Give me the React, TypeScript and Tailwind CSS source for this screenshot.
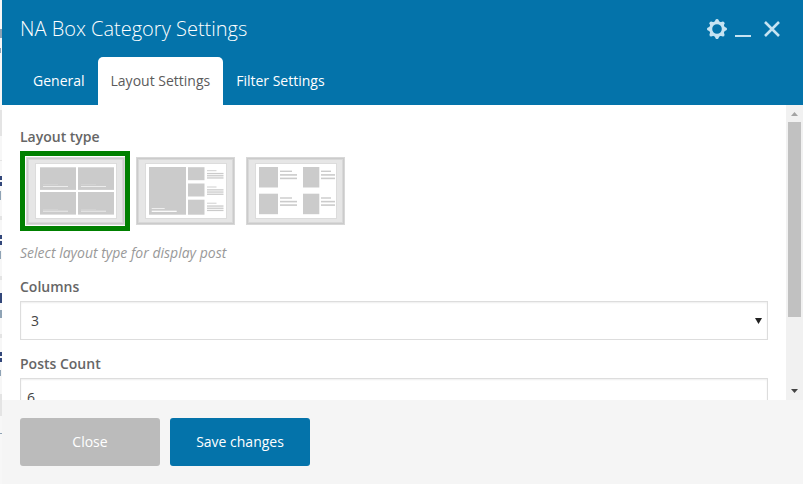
import React, { useState } from "react";

const tabs = ["General", "Layout Settings", "Filter Settings"];

function Frame({ children }: { children: React.ReactNode }) {
  return (
    <svg viewBox="0 0 100 70" className="block h-[70px] w-[100px]" aria-hidden="true">
      <rect x="1" y="1" width="99" height="68" fill="#d8d8d8" />
      <rect x="2" y="2" width="97" height="66" fill="#cbcbcb" />
      <rect x="3" y="3" width="95" height="64" fill="#d8d8d8" />
      <rect x="4" y="4" width="93" height="62" fill="#e6e6e6" />
      <rect x="10" y="7" width="82" height="56" fill="#dcdcdc" />
      <rect x="11" y="8" width="80" height="54" fill="#fff" />
      {children}
    </svg>
  );
}

function Lines({ x, y, w, short, gap }: { x: number; y: number; w: number; short: number; gap: number }) {
  return (
    <g fill="#cbcbcb">
      <rect x={x} y={y} width={short} height="1.4" />
      <rect x={x} y={y + gap} width={w} height="1.6" />
      <rect x={x} y={y + gap * 2} width={w} height="1.6" />
    </g>
  );
}

function GridArt() {
  return (
    <Frame>
      {[15, 53].map((x) =>
        [11.3, 36].map((y) => (
          <g key={`${x}-${y}`}>
            <rect x={x} y={y} width="36" height="22.6" fill="#cbcbcb" />
            <rect x={x + 3} y={y + 17} width="15" height="0.7" fill="#d6d6d6" />
            <rect x={x + 3} y={y + 18.7} width="25" height="1" fill="#ececec" />
          </g>
        )),
      )}
    </Frame>
  );
}

function FeatureArt() {
  return (
    <Frame>
      <rect x="14" y="11" width="37" height="47.7" fill="#cbcbcb" />
      <rect x="16.7" y="52" width="13" height="1" fill="#eee" />
      <rect x="16.7" y="54.7" width="25" height="1.2" fill="#fff" />
      {[11.2, 27.5, 43.7].map((y) => (
        <g key={y}>
          <rect x="53" y={y} width="16.5" height={y > 40 ? 15 : 13} fill="#cbcbcb" />
          <rect x="72" y={y + 3} width="9.5" height="1" fill="#cfcfcf" />
          <rect x="72" y={y + 5.7} width="16.5" height="1.3" fill="#cbcbcb" />
          <rect x="72" y={y + 7.9} width="16.5" height="1.3" fill="#cbcbcb" />
          <rect x="72" y={y + 10.1} width="16.5" height="1.3" fill="#cbcbcb" />
        </g>
      ))}
    </Frame>
  );
}

function ListArt() {
  return (
    <Frame>
      {[11, 37.7].map((y) => (
        <g key={y}>
          <rect x="14" y={y} width="19" height="20.5" fill="#cbcbcb" />
          <Lines x={35} y={y + 3.6} w={17} short={12} gap={3.5} />
          <rect x="58" y={y} width="16.3" height="20.5" fill="#cbcbcb" />
          <Lines x={76} y={y + 3.6} w={14} short={10} gap={3.5} />
        </g>
      ))}
    </Frame>
  );
}

const layouts = [
  { id: "grid", name: "Grid", art: <GridArt /> },
  { id: "feature", name: "Feature", art: <FeatureArt /> },
  { id: "list", name: "List", art: <ListArt /> },
];

function GearIcon() {
  return (
    <svg viewBox="0 0 20 20" className="size-5" aria-hidden="true">
      <circle cx="10" cy="10" r="6.3" fill="none" stroke="currentColor" strokeWidth="3" />
      {[0, 45, 90, 135, 180, 225, 270, 315].map((a) => (
        <path key={a} d="M7.2 3.5 8.7.6Q10-.7 11.3.6L12.8 3.5Z" fill="currentColor" transform={`rotate(${a} 10 10)`} />
      ))}
    </svg>
  );
}

function PageEdge() {
  return (
    <div className="flex w-[2px] shrink-0 bg-[#f7f7f7]" aria-hidden="true">
      <svg width="2" height="484" className="block">
        <g fill="#e4e4e4">
          <rect y="110" width="2" height="26" />
          <rect y="160" width="2" height="1" />
          <rect y="216" width="2" height="4" />
          <rect y="276" width="2" height="4" />
          <rect y="334" width="2" height="4" />
          <rect y="394" width="2" height="22" />
        </g>
        <g fill="#8fa3b5">
          <rect y="29" width="2" height="9" />
          <rect y="48" width="1" height="5" />
          <rect y="191" width="1" height="9" />
          <rect y="251" width="1" height="8" />
          <rect y="310" width="2" height="8" />
          <rect y="370" width="1" height="6" />
          <rect y="433" width="2" height="1" />
        </g>
        <g fill="#33477a">
          <rect y="176" width="2" height="4" />
          <rect y="182" width="2" height="4" />
          <rect y="235" width="2" height="4" />
          <rect y="241" width="2" height="4" />
          <rect y="293" width="2" height="10" />
          <rect y="352" width="2" height="4" />
          <rect y="358" width="2" height="4" />
        </g>
      </svg>
    </div>
  );
}

export default function App() {
  const [tab, setTab] = useState("Layout Settings");
  const [layout, setLayout] = useState("grid");
  const [columns, setColumns] = useState("3");
  const [count, setCount] = useState("6");

  return (
    <div className="flex h-screen overflow-hidden bg-white font-['Open_Sans',sans-serif] text-sm text-[#5b5b5b]">
      <PageEdge />
      <div className="flex min-w-0 flex-1 flex-col">
        <header className="bg-[#0473aa] px-[18px] text-white">
          <div className="flex h-[57px] items-center justify-between">
            <h1 className="text-xl font-light">NA Box Category Settings</h1>
            <div className="flex items-center gap-2 text-[#c6e3f2]">
              <button type="button" aria-label="Settings" className="block">
                <GearIcon />
              </button>
              <button type="button" aria-label="Minimize" className="flex h-5 w-4 items-end pb-[2px]">
                <span className="h-[2px] w-full bg-current" />
              </button>
              <button type="button" aria-label="Close window" className="ml-1 block pr-1">
                <svg viewBox="0 0 18 18" className="size-[18px]" aria-hidden="true">
                  <path d="M2 2 16 16M16 2 2 16" stroke="currentColor" strokeWidth="2.6" fill="none" />
                </svg>
              </button>
            </div>
          </div>
          <div role="tablist" className="flex h-12">
            {tabs.map((t) => (
              <button
                key={t}
                type="button"
                role="tab"
                aria-selected={t === tab}
                onClick={() => setTab(t)}
                className={
                  t === tab
                    ? "rounded-t-[5px] bg-white px-[13px] text-[#5b5b5b]"
                    : "px-[13px] text-white"
                }
              >
                {t}
              </button>
            ))}
          </div>
        </header>

        <div className="flex min-h-0 flex-1">
          <main className="min-w-0 flex-1 overflow-hidden px-[18px] pt-[22px]">
            <fieldset>
              <legend className="mb-1 leading-5 font-semibold text-[#666]">Layout type</legend>
              <div className="flex">
                {layouts.map((l) => (
                  <label
                    key={l.id}
                    className={
                      l.id === layout
                        ? "cursor-pointer border-[5px] border-[#008000]"
                        : "cursor-pointer border-[5px] border-transparent"
                    }
                  >
                    <input
                      type="radio"
                      name="layout"
                      value={l.id}
                      aria-label={l.name}
                      checked={l.id === layout}
                      onChange={() => setLayout(l.id)}
                      className="sr-only"
                    />
                    {l.art}
                  </label>
                ))}
              </div>
            </fieldset>
            <p className="mt-3 leading-5 text-[#999] italic">Select layout type for display post</p>

            <label htmlFor="columns" className="mt-3.5 block leading-5 font-semibold text-[#666]">
              Columns
            </label>
            <div className="mt-1 grid items-center">
              <select
                id="columns"
                value={columns}
                onChange={(e) => setColumns(e.target.value)}
                className="col-start-1 row-start-1 h-[39px] w-full appearance-none border border-[#ddd] bg-white px-2.5 text-[#444] shadow-[inset_0_1px_2px_rgba(0,0,0,0.07)]"
              >
                <option>1</option>
                <option>2</option>
                <option>3</option>
                <option>4</option>
              </select>
              <svg
                viewBox="0 0 7 6"
                className="pointer-events-none col-start-1 row-start-1 mr-1.5 h-1.5 w-[7px] justify-self-end"
                aria-hidden="true"
              >
                <path d="M0 0H7L3.5 6Z" fill="#222" />
              </svg>
            </div>

            <label htmlFor="count" className="mt-3.5 block leading-5 font-semibold text-[#666]">
              Posts Count
            </label>
            <input
              id="count"
              type="text"
              value={count}
              onChange={(e) => setCount(e.target.value)}
              className="mt-1 block h-[39px] w-full border border-[#ddd] bg-white px-1.5 text-[#444] shadow-[inset_0_1px_2px_rgba(0,0,0,0.07)]"
            />
          </main>

          <div className="flex w-[17px] shrink-0 flex-col items-center bg-[#f1f1f1]" aria-hidden="true">
            <svg viewBox="0 0 17 17" className="block size-[17px] shrink-0">
              <path d="M5 11 8.500 7 12 11Z" fill="#a3a3a3" />
            </svg>
            <div className="h-[66%] w-[13px] bg-[#c1c1c1]" />
            <svg viewBox="0 0 17 17" className="mt-auto block size-[17px] shrink-0">
              <path d="M5 6H12L8.500 10Z" fill="#444" />
            </svg>
          </div>
        </div>

        <footer className="flex gap-2.5 bg-[#f5f5f5] px-[18px] pt-[18px] pb-[18px]">
          <button type="button" className="h-12 w-[140px] rounded-[3px] bg-[#bbb] text-white">
            Close
          </button>
          <button type="button" className="h-12 w-[140px] rounded-[3px] bg-[#0473aa] text-white">
            Save changes
          </button>
        </footer>
      </div>
    </div>
  );
}
